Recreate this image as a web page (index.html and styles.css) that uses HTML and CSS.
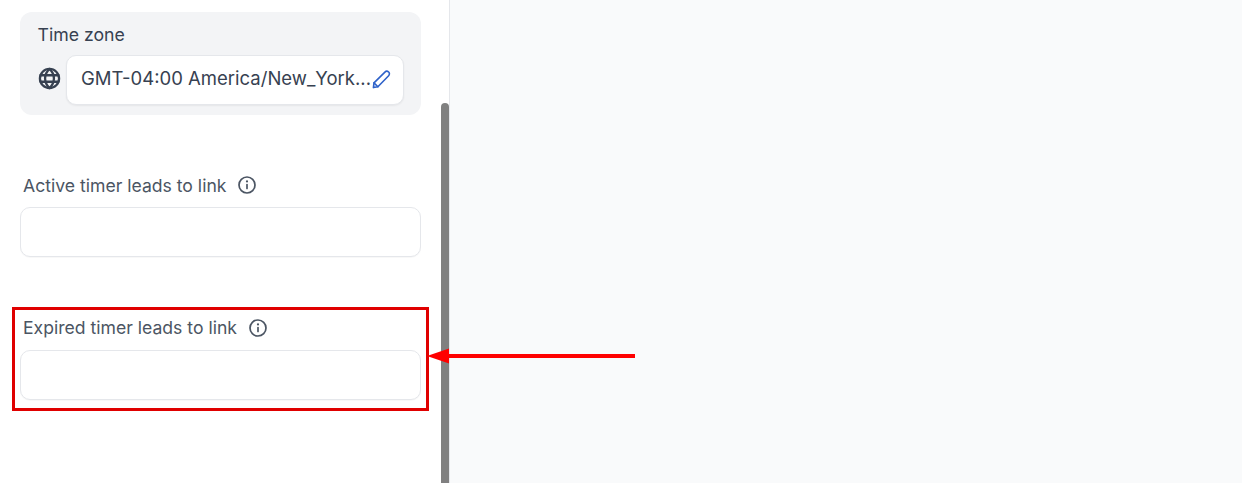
FILE: index.html
```html
<!DOCTYPE html>
<html lang="en">
<head>
<meta charset="utf-8">
<title>Timer settings</title>
<link rel="stylesheet" href="styles.css">
</head>
<body>
<div class="app">
  <aside class="panel">
    <section class="zone-card">
      <div class="zone-title">Time zone</div>
      <div class="zone-row">
        <svg class="globe" viewBox="0 0 24 24" fill="none" stroke="#374151" stroke-width="2.400" stroke-linecap="round" stroke-linejoin="round"><circle cx="12" cy="12" r="10"/><path d="M2.600 8.600h18.800M2.600 15.400h18.800"/><path d="M12 2c-3.200 3-4.600 6.400-4.600 10s1.400 7 4.600 10c3.200-3 4.600-6.400 4.600-10S15.200 5 12 2z"/></svg>
        <div class="zone-box">
          <span class="zone-text">GMT-04:00 America/New_York...</span>
          <svg class="pencil" viewBox="0 0 20 20" fill="none" stroke="#2f62c9" stroke-width="1.700" stroke-linecap="round" stroke-linejoin="round"><path d="M1.500 18.500l.6-5L13.600 2.200c1.100-1.100 2.800-1.100 3.900-.1s1.100 2.800 0 3.900L6.200 17.600z"/><path d="M2.100 13.500l4.100 4.100"/></svg>
        </div>
      </div>
    </section>
    <div class="field field-active">
      <div class="field-label"><span>Active timer leads to link</span>
        <svg class="info" viewBox="0 0 18 18" fill="none" stroke="#4b5563" stroke-width="1.700" stroke-linecap="round"><circle cx="9" cy="9" r="8"/><path d="M9 8.500v4"/><path d="M9 5.400v.1" stroke-width="2.200"/></svg>
      </div>
      <div class="field-input"></div>
    </div>
    <div class="field field-expired">
      <div class="field-label"><span>Expired timer leads to link</span>
        <svg class="info" viewBox="0 0 18 18" fill="none" stroke="#4b5563" stroke-width="1.700" stroke-linecap="round"><circle cx="9" cy="9" r="8"/><path d="M9 8.500v4"/><path d="M9 5.400v.1" stroke-width="2.200"/></svg>
      </div>
      <div class="field-input"></div>
    </div>
    <div class="scroll-thumb"></div>
  </aside>
  <main class="canvas"></main>
  <div class="highlight"></div>
  <svg class="arrow" viewBox="0 0 208 20"><path d="M0 10L22 2.500V8H208V12H22V17.500z" fill="#f00"/></svg>
</div>
</body>
</html>
```
FILE: styles.css
```css
* { box-sizing: border-box; }
html, body { margin: 0; height: 100%; overflow: hidden; }
body { font-family: Inter, "Liberation Sans", sans-serif; background: #fff; }
.app { position: relative; display: flex; width: 1242px; height: 483px; overflow: hidden; }
.panel { position: relative; width: 450px; flex: none; padding: 12px 28px 0 20px; background: #fff; border-right: 1px solid #e5e7eb; }
.canvas { flex: 1; background: #f9fafb; }
.zone-card { height: 103px; padding: 12px 17px 0 18px; background: #f3f4f6; border-radius: 12px; }
.zone-title { font-size: 17.7px; line-height: 22px; color: #374151; margin-left: -0.5px; }
.zone-row { display: flex; align-items: center; gap: 5px; margin-top: 9px; }
.globe { width: 23px; height: 23px; flex: none; margin-bottom: 3px; }
.zone-box { display: flex; align-items: center; justify-content: space-between; flex: 1; height: 50px; padding: 0 12px 4px 14px; background: #fff; border: 1px solid #e5e7eb; border-radius: 10px; box-shadow: 0 1px 2px rgba(0,0,0,.06); }
.zone-text { font-size: 18.5px; color: #374151; white-space: nowrap; }
.pencil { width: 19px; height: 19px; flex: none; margin-top: 3px; }
.field-active { margin-top: 59px; }
.field-expired { margin-top: 60px; }
.field-label { display: flex; align-items: center; gap: 12px; height: 21px; padding-left: 3px; font-size: 17.6px; color: #4b5563; }
.field-active .field-label { height: 22px; }
.info { width: 18px; height: 18px; flex: none; }
.field-input { height: 50px; margin-top: 11px; background: #fff; border: 1px solid #e5e7eb; border-radius: 10px; box-shadow: 0 1px 1px rgba(0,0,0,.03); }
.field-expired .field-input { margin-top: 12px; }
.scroll-thumb { position: absolute; left: 441px; top: 103px; width: 8px; height: 380px; background: #808080; border-radius: 4px 4px 0 0; }
.highlight { position: absolute; left: 12px; top: 307px; width: 417px; height: 104px; border: 3px solid #e00000; }
.arrow { position: absolute; left: 427px; top: 346px; width: 208px; height: 20px; }
```
